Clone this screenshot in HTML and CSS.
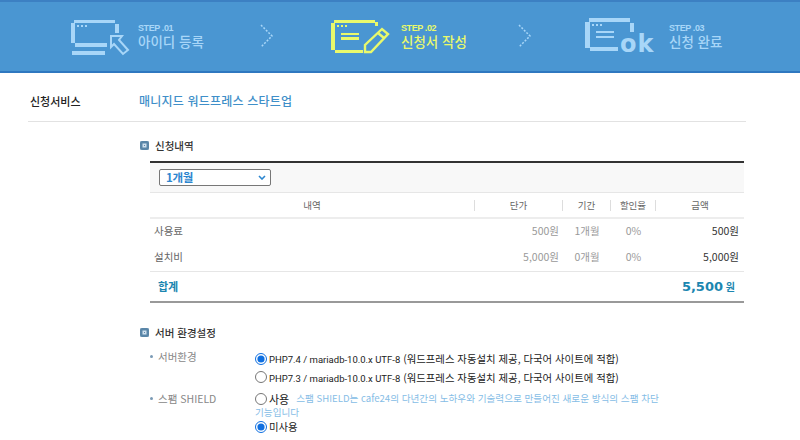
FILE: index.html
```html
<!DOCTYPE html>
<html lang="ko">
  <head>
    <meta charset="UTF-8" />
    <title>신청서 작성</title>
    <link rel="stylesheet" href="styles.css">
  </head>
  <body>
    <div class="steps">
      <div class="step">
        <svg class="icon" width="60" height="40" viewBox="0 0 60 40" shape-rendering="crispEdges">
          <path fill="currentColor" d="M4 2h41v3H4zM1 5h4v20H1zM45 6h4v9h-4zM5 25h32v4H5zM2 33h33v4H2zM7 7h2v2H7zM11 7h2v2h-2zM15 7h2v2h-2z" />
          <path fill="none" stroke="currentColor" stroke-width="2" d="M41 18h11l-3 4 9 10-5 4-9-10-3 3z" shape-rendering="auto" />
        </svg>
        <div>
          <div class="step-no">STEP .01</div>
          <div class="step-name">아이디 등록</div>
        </div>
      </div>
      <svg class="chevron" width="14" height="24" viewBox="0 0 14 24"><path d="M1 1l11 11L1 23" /></svg>
      <div class="step on">
        <svg class="icon" width="62" height="40" viewBox="0 0 62 40" shape-rendering="crispEdges">
          <path fill="currentColor" d="M3 2h41v3H3zM0 5h4v27H0zM44 4h3v4h-3zM4 32h28v3H4zM6 7h2v2H6zM10 7h2v2h-2zM14 7h2v2h-2zM10 15h18v2H10zM10 19h18v3H10z" />
          <path fill="none" stroke="currentColor" stroke-width="2.4" d="M34 34v-7l17-16 6 5-17 18zM47 15l6 5" shape-rendering="auto" />
        </svg>
        <div>
          <div class="step-no">STEP .02</div>
          <div class="step-name">신청서 작성</div>
        </div>
      </div>
      <svg class="chevron" width="14" height="24" viewBox="0 0 14 24"><path d="M1 1l11 11L1 23" /></svg>
      <div class="step">
        <svg class="icon" width="76" height="40" viewBox="0 0 76 40" shape-rendering="crispEdges">
          <path fill="currentColor" d="M4 0h41v4H4zM0 4h5v26H0zM45 5h4v9h-4zM5 29h28v4H5zM7 6h2v2H7zM11 6h2v2h-2zM15 6h2v2h-2zM11 13h18v2H11zM11 18h18v2H11z" />
          <text class="ok" x="35" y="34">ok</text>
        </svg>
        <div>
          <div class="step-no">STEP .03</div>
          <div class="step-name">신청 완료</div>
        </div>
      </div>
    </div>

    <div class="content">
      <div class="service">
        <div class="service-label">신청서비스</div>
        <div class="service-name">매니지드 워드프레스 스타트업</div>
      </div>

      <h3 class="sub-title">신청내역</h3>
      <table class="order">
        <colgroup>
          <col class="col-item" />
          <col class="col-price" />
          <col class="col-term" />
          <col class="col-rate" />
          <col class="col-sum" />
        </colgroup>
        <thead>
          <tr class="period">
            <td colspan="5">
              <div class="period-select">
                <span>1개월</span>
                <svg width="8" height="5" viewBox="0 0 8 5"><path d="M1 1l3 3 3-3" /></svg>
              </div>
            </td>
          </tr>
          <tr class="head">
            <th><span>내역</span></th>
            <th><span>단가</span></th>
            <th><span>기간</span></th>
            <th><span>할인율</span></th>
            <th>금액</th>
          </tr>
        </thead>
        <tbody>
          <tr class="line">
            <td class="name">사용료</td>
            <td class="price">500원</td>
            <td class="mid">1개월</td>
            <td class="mid">0%</td>
            <td class="amount">500원</td>
          </tr>
          <tr class="line">
            <td class="name">설치비</td>
            <td class="price">5,000원</td>
            <td class="mid">0개월</td>
            <td class="mid">0%</td>
            <td class="amount">5,000원</td>
          </tr>
          <tr class="total">
            <td class="total-label">합계</td>
            <td class="total-sum" colspan="4"><strong>5,500</strong> 원</td>
          </tr>
        </tbody>
      </table>

      <h3 class="sub-title server">서버 환경설정</h3>
      <div class="field">
        <div class="field-label">서버환경</div>
        <div class="field-body">
          <label class="opt"><input type="radio" name="php" checked /><span><span class="en">PHP7.4 / mariadb-10.0.x UTF-8</span> (워드프레스 자동설치 제공, 다국어 사이트에 적합)</span></label>
          <label class="opt"><input type="radio" name="php" /><span><span class="en">PHP7.3 / mariadb-10.0.x UTF-8</span> (워드프레스 자동설치 제공, 다국어 사이트에 적합)</span></label>
        </div>
      </div>
      <div class="field shield">
        <div class="field-label">스팸 SHIELD</div>
        <div class="field-body">
          <div class="shield-use">
            <label class="opt-inline"><input type="radio" name="spam" />사용</label>
            <span class="note">스팸 SHIELD는 cafe24의 다년간의 노하우와 기술력으로 만들어진 새로운 방식의 스팸 차단 기능입니다</span>
          </div>
          <label class="opt"><input type="radio" name="spam" checked />미사용</label>
        </div>
      </div>
    </div>
  </body>
</html>
```

FILE: styles.css
```css
body {
  margin: 0;
  height: 440px;
  overflow: hidden;
  font-family: "Noto Sans CJK KR", "Liberation Sans", sans-serif;
  font-size: 10px;
  color: #333;
  background: #fff;
}

.steps {
  display: grid;
  grid-template-columns: 190px 71px 187px 67px 1fr;
  align-items: start;
  width: 730px;
  height: 69px;
  padding-left: 70px;
  background: #4a96d2;
  border-top: 2px solid #3c80c3;
  border-bottom: 2px solid #2f78c0;
}

.step {
  display: flex;
  gap: 8px;
  margin-top: 16px;
  color: #a8d6f8;
}

.step.on {
  color: #e9f96b;
}

.icon {
  display: block;
  flex: none;
}

.ok {
  font-family: "DejaVu Sans", sans-serif;
  font-weight: bold;
  font-size: 24px;
  letter-spacing: 1px;
  fill: currentColor;
}

.step-no {
  margin-top: 5px;
  font-family: "Liberation Sans", sans-serif;
  font-size: 9px;
  font-weight: bold;
  letter-spacing: -0.4px;
  line-height: 11px;
}

.step-name {
  font-size: 13.5px;
  font-weight: 500;
  line-height: 14px;
}

.chevron {
  margin-top: 22px;
  fill: none;
  stroke: #a8d6f8;
  stroke-width: 1.5;
  stroke-dasharray: 2 1.5;
}

.content {
  padding: 0 54px 0 28px;
}

.service {
  display: flex;
  align-items: center;
  height: 49px;
  padding-top: 7px;
  box-sizing: border-box;
  border-bottom: 1px solid #e2e2e2;
}

.service-label {
  width: 111px;
  padding: 1px 0 0 2px;
  box-sizing: border-box;
  font-size: 11px;
  font-weight: 500;
  color: #222;
}

.service-name {
  font-size: 12px;
  font-weight: 500;
  letter-spacing: 0.2px;
  color: #3f8fc9;
}

.sub-title {
  display: flex;
  align-items: center;
  gap: 6px;
  margin: 15px 0 0 112px;
  height: 16px;
  font-size: 10.5px;
  font-weight: 500;
  color: #333;
}

.sub-title::before {
  content: "";
  width: 9px;
  height: 9px;
  border-radius: 2px;
  background: #5a86a8;
  box-shadow: inset 0 0 0 2.5px #5a86a8, inset 0 0 0 4px #cfe0ee;
}

.sub-title.server {
  margin-top: 22px;
}

.order {
  width: 594px;
  margin: 8px 0 0 122px;
  border-collapse: collapse;
  table-layout: fixed;
  border-top: 2px solid #333;
  border-bottom: 2px solid #999;
}

.col-item { width: 325px; }
.col-price { width: 88px; }
.col-term { width: 48px; }
.col-rate { width: 45px; }

.period td {
  height: 29px;
  padding: 0 0 0 9px;
  background: #f8f8f8;
  border-bottom: 1px solid #e6e6e6;
}

.period-select {
  display: flex;
  align-items: center;
  justify-content: space-between;
  width: 112px;
  height: 17px;
  padding: 0 4px 0 6px;
  box-sizing: border-box;
  font-size: 11.5px;
  letter-spacing: -0.3px;
  line-height: 15px;
  font-weight: bold;
  color: #2c86cf;
  background: #fff;
  border: 1px solid #777;
  border-radius: 2px;
}

.period-select svg {
  fill: none;
  stroke: #2c86cf;
  stroke-width: 1.6;
}

.head th {
  height: 24px;
  padding: 0;
  font-size: 9.5px;
  font-weight: 400;
  color: #666;
  text-align: center;
  border-bottom: 2px solid #ededed;
}

.head span {
  display: block;
  border-right: 1px solid #ddd;
  line-height: 11px;
}

.line td {
  height: 26.5px;
  padding: 0 0 2px;
  box-sizing: border-box;
  font-size: 10.5px;
  color: #999;
}

.line .name {
  padding-left: 4px;
  color: #666;
}

.line .price {
  padding-right: 4px;
  text-align: right;
}

.line .mid {
  text-align: center;
}

.line .amount {
  padding-right: 5px;
  text-align: right;
  color: #333;
}

.total td {
  height: 29px;
  padding: 0;
  border-top: 1px solid #e6e6e6;
  color: #1b86b0;
}

.total .total-label {
  padding-left: 8px;
  font-size: 11px;
  font-weight: bold;
}

.total .total-sum {
  padding-right: 9px;
  text-align: right;
  font-size: 10px;
  font-weight: bold;
}

.total-sum strong {
  font-family: "DejaVu Sans", sans-serif;
  font-size: 13px;
}

.field {
  display: flex;
  margin: 9px 0 0 122px;
}

.field-label {
  display: flex;
  align-items: center;
  flex: none;
  gap: 5px;
  width: 105px;
  height: 14px;
  font-size: 10.5px;
  color: #888;
}

.field-label::before {
  content: "";
  width: 3px;
  height: 3px;
  border-radius: 50%;
  background: #7a9ab5;
}

.field-body {
  width: 405px;
  font-size: 10.5px;
  color: #222;
}

.opt,
.opt-inline {
  display: flex;
  align-items: center;
  gap: 2px;
  height: 18.5px;
  font-size: 10.4px;
  white-space: nowrap;
}

.opt-inline {
  display: inline-flex;
  height: 14px;
  margin-right: 4px;
  vertical-align: middle;
  font-size: 11px;
}

.en {
  font-family: Roboto, sans-serif;
  font-size: 9.5px;
}

input[type="radio"] {
  flex: none;
  width: 12px;
  height: 12px;
  margin: 0;
  accent-color: #0f6fe0;
}

.field.shield {
  margin-top: 5px;
}

.shield-use {
  line-height: 12px;
}

.note {
  font-size: 9.6px;
  color: #86bde6;
}
```
